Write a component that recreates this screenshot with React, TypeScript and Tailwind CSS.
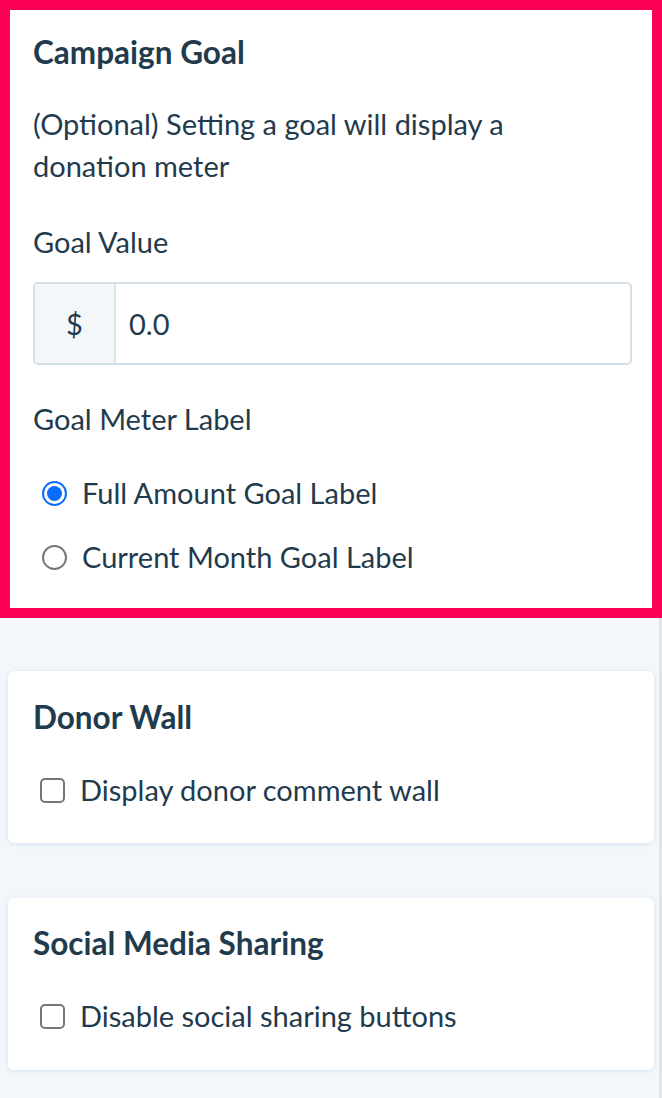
import React from "react";

const font = { fontFamily: '"Lato", "Open Sans", sans-serif' };

function Checkbox() {
  return (
    <span className="inline-block w-[25px] h-[25px] rounded-[5px] border-2 border-[#767676] bg-white shrink-0" />
  );
}

function Radio({ checked }: { checked?: boolean }) {
  return checked ? (
    <span className="inline-flex items-center justify-center w-[25px] h-[25px] rounded-full border-2 border-[#0a6cff] bg-white shrink-0">
      <span className="w-[15px] h-[15px] rounded-full bg-[#0a6cff]" />
    </span>
  ) : (
    <span className="inline-block w-[25px] h-[25px] rounded-full border-2 border-[#767676] bg-white shrink-0" />
  );
}

export default function App() {
  return (
    <div className="w-[662px] h-[1098px] bg-[#f3f7fb] text-[#1f3b4d] relative overflow-hidden" style={font}>
      <div className="border-[10px] border-[#fa0057] bg-white h-[618px] pl-[23px] pr-[20px] pt-[24px]">
        <h2 className="text-[31.5px] font-bold leading-[36px]">Campaign Goal</h2>
        <p className="text-[29px] leading-[42px] mt-[33px]">
          (Optional) Setting a goal will display a<br />donation meter
        </p>
        <div className="text-[29px] leading-[42px] mt-[34px]">Goal Value</div>
        <div className="mt-[19px] flex h-[83px] w-[599px] rounded-[5px] border-2 border-[#d2dfe7] overflow-hidden">
          <div className="w-[81px] bg-[#f4f7fa] border-r-2 border-[#d9e5ec] flex items-center justify-center text-[29px]">$</div>
          <div className="flex-1 flex items-center pl-[13px] text-[29px]">0.0</div>
        </div>
        <div className="text-[29px] leading-[42px] mt-[33px]">Goal Meter Label</div>
        <div className="mt-[32px] flex flex-col gap-[22px] pl-[9px]">
          <label className="flex items-center gap-[15px] text-[29px] leading-[42px]">
            <Radio checked />
            Full Amount Goal Label
          </label>
          <label className="flex items-center gap-[15px] text-[29px] leading-[42px]">
            <Radio />
            Current Month Goal Label
          </label>
        </div>
      </div>

      <div className="mx-[8px] mt-[53px] h-[172px] bg-white rounded-[6px] shadow-[0_1px_4px_rgba(120,160,210,0.25)] pl-[25px] pt-[28px]">
        <h2 className="text-[31.5px] font-bold leading-[36px]">Donor Wall</h2>
        <label className="mt-[34px] pl-[7px] flex items-center gap-[15px] text-[29px] leading-[42px]">
          <Checkbox />
          Display donor comment wall
        </label>
      </div>

      <div className="mx-[8px] mt-[55px] h-[172px] bg-white rounded-[6px] shadow-[0_1px_4px_rgba(120,160,210,0.25)] pl-[25px] pt-[27px]">
        <h2 className="text-[31.5px] font-bold leading-[36px]">Social Media Sharing</h2>
        <label className="mt-[34px] pl-[7px] flex items-center gap-[15px] text-[29px] leading-[42px]">
          <Checkbox />
          Disable social sharing buttons
        </label>
      </div>

      <div className="absolute right-0 top-[618px] bottom-0 w-[3px] bg-[#e2e4e6]" />
    </div>
  );
}
